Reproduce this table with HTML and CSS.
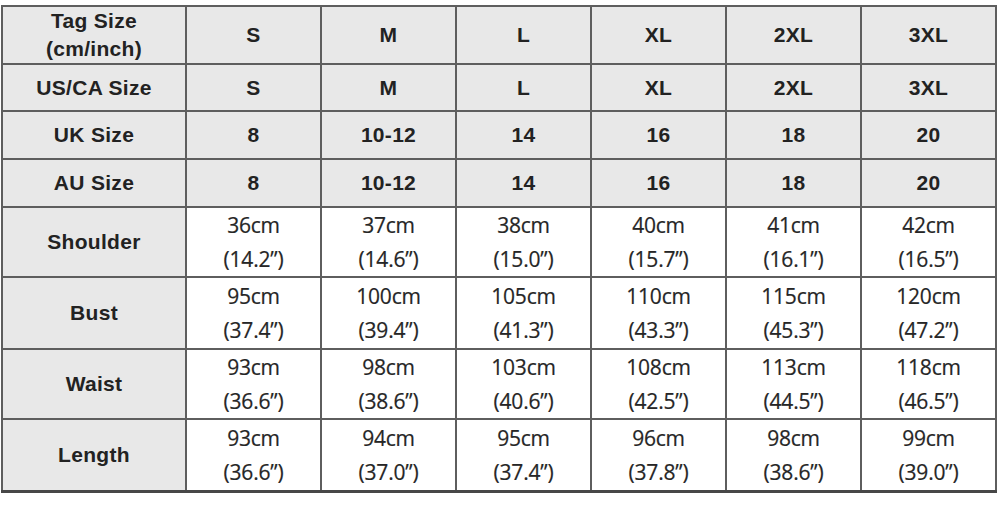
FILE: index.html
```html
<!DOCTYPE html>
<html>
<head>
<meta charset="utf-8">
<link rel="stylesheet" href="styles.css">
</head>
<body>
<div class="page">
<table class="chart">
  <colgroup>
    <col class="c-label"><col class="c-size"><col class="c-size"><col class="c-size"><col class="c-size"><col class="c-size"><col class="c-size">
  </colgroup>
  <tr class="r-tag">
    <th class="label two">Tag Size<br>(cm/inch)</th>
    <th>S</th><th>M</th><th>L</th><th>XL</th><th>2XL</th><th>3XL</th>
  </tr>
  <tr class="r-std">
    <th class="label">US/CA Size</th>
    <th>S</th><th>M</th><th>L</th><th>XL</th><th>2XL</th><th>3XL</th>
  </tr>
  <tr class="r-std2">
    <th class="label">UK Size</th>
    <th>8</th><th>10-12</th><th>14</th><th>16</th><th>18</th><th>20</th>
  </tr>
  <tr class="r-std2">
    <th class="label">AU Size</th>
    <th>8</th><th>10-12</th><th>14</th><th>16</th><th>18</th><th>20</th>
  </tr>
  <tr class="r-m1">
    <th class="label">Shoulder</th>
    <td>36cm<br>(14.2”)</td><td>37cm<br>(14.6”)</td><td>38cm<br>(15.0”)</td><td>40cm<br>(15.7”)</td><td>41cm<br>(16.1”)</td><td>42cm<br>(16.5”)</td>
  </tr>
  <tr class="r-m2">
    <th class="label">Bust</th>
    <td>95cm<br>(37.4”)</td><td>100cm<br>(39.4”)</td><td>105cm<br>(41.3”)</td><td>110cm<br>(43.3”)</td><td>115cm<br>(45.3”)</td><td>120cm<br>(47.2”)</td>
  </tr>
  <tr class="r-m1">
    <th class="label">Waist</th>
    <td>93cm<br>(36.6”)</td><td>98cm<br>(38.6”)</td><td>103cm<br>(40.6”)</td><td>108cm<br>(42.5”)</td><td>113cm<br>(44.5”)</td><td>118cm<br>(46.5”)</td>
  </tr>
  <tr class="r-m2 last">
    <th class="label">Length</th>
    <td>93cm<br>(36.6”)</td><td>94cm<br>(37.0”)</td><td>95cm<br>(37.4”)</td><td>96cm<br>(37.8”)</td><td>98cm<br>(38.6”)</td><td>99cm<br>(39.0”)</td>
  </tr>
</table>
</div>
</body>
</html>
```

FILE: styles.css
```css
html, body {
  margin: 0;
  padding: 0;
  background: #ffffff;
}

.page {
  width: 1000px;
  height: 510px;
  padding: 5px 0 0 1px;
  box-sizing: border-box;
  overflow: hidden;
}

.chart {
  border-collapse: collapse;
  table-layout: fixed;
  width: 996px;
  border: 2px solid #5e5e5e;
}

.c-label { width: 184px; }
.c-size { width: 135px; }

.chart th,
.chart td {
  border: 2px solid #5e5e5e;
  padding: 0;
  text-align: center;
  vertical-align: middle;
}

.chart th {
  background: #e8e8e8;
  font-family: "Liberation Sans", Arial, sans-serif;
  font-weight: bold;
  font-size: 21px;
  letter-spacing: 0.3px;
  color: #222222;
  line-height: 28px;
}

.chart td {
  background: #ffffff;
  font-family: "Open Sans", "Noto Sans", sans-serif;
  font-weight: normal;
  font-size: 21px;
  color: #262626;
  line-height: 34px;
  letter-spacing: -0.2px;
  -webkit-text-stroke: 0.2px #262626;
}

.r-tag { height: 58px; }
.r-std { height: 47px; }
.r-std2 { height: 48px; }
.r-m1 { height: 70px; }
.r-m2 { height: 72px; }

.last th,
.last td {
  border-bottom: 3px solid #474747;
}
```
